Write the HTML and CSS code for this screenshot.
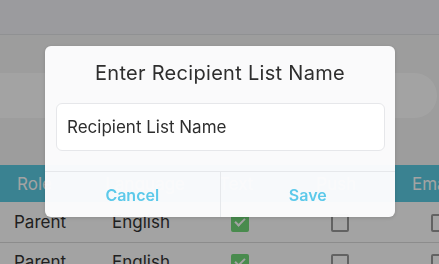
FILE: index.html
```html
<!DOCTYPE html>
<html lang="en">
<head>
  <meta charset="UTF-8">
  <meta name="viewport" content="width=device-width, initial-scale=1.0">
  <title>Recipient Lists</title>
  <link rel="stylesheet" href="styles.css">
</head>
<body>
  <div class="topbar"></div>

  <div class="search-row">
    <div class="search-pill"></div>
  </div>

  <table class="recipients">
    <thead>
      <tr>
        <th class="col-role">Role</th>
        <th class="col-lang">Language</th>
        <th class="col-check">Text</th>
        <th class="col-check">Push</th>
        <th class="col-email">Email</th>
      </tr>
    </thead>
    <tbody>
      <tr>
        <td class="col-role">Parent</td>
        <td class="col-lang">English</td>
        <td class="col-check"><span class="box checked"></span></td>
        <td class="col-check"><span class="box"></span></td>
        <td class="col-email"><span class="box"></span></td>
      </tr>
      <tr>
        <td class="col-role">Parent</td>
        <td class="col-lang">English</td>
        <td class="col-check"><span class="box checked"></span></td>
        <td class="col-check"><span class="box"></span></td>
        <td class="col-email"><span class="box"></span></td>
      </tr>
    </tbody>
  </table>

  <!-- Modal prompt -->
  <div class="backdrop"></div>
  <div class="dialog">
    <div class="dialog-title">Enter Recipient List Name</div>
    <div class="dialog-body">
      <input type="text" class="name-input" placeholder="Recipient List Name">
    </div>
    <div class="dialog-actions">
      <button class="action">Cancel</button>
      <button class="action">Save</button>
    </div>
  </div>
</body>
</html>
```

FILE: styles.css
```css
body {
  font-family: Inter, Lato, sans-serif;
  margin: 0;
  padding: 0;
  background-color: #f6f6f6;
  overflow: hidden;
  width: 439px;
  height: 264px;
}

.topbar {
  height: 34px;
  background-color: #f2f3f7;
  border-bottom: 1px solid #e2e3e6;
}

.search-row {
  padding: 38px 2px 47px 0;
}

.search-pill {
  height: 45px;
  margin-left: -30px;
  background-color: #ffffff;
  border-radius: 23px;
}

.recipients {
  width: 490px;
  border-collapse: collapse;
  table-layout: fixed;
}

.recipients th,
.recipients td {
  box-sizing: border-box;
  padding: 0;
  font-size: 17px;
  text-align: left;
  white-space: nowrap;
}

.recipients th {
  height: 37px;
  background-color: #5ccbe3;
  color: #ffffff;
  font-weight: normal;
}

.recipients td {
  height: 40px;
  color: #333;
  border-bottom: 1px solid #dcdcdc;
  background-color: #ffffff;
}

.recipients .col-role { width: 100px; padding-left: 14px; }
.recipients th.col-role { padding-left: 17px; }
.recipients .col-lang { width: 90px; padding-left: 12px; }
.recipients th.col-lang { text-align: center; padding-left: 0; }
.recipients .col-check { width: 100px; text-align: center; }
.recipients th.col-check { padding-right: 8px; }
.recipients .col-email { width: 200px; padding-left: 41px; }
.recipients th.col-email { padding-left: 22px; }

.box {
  display: inline-block;
  box-sizing: border-box;
  width: 18px;
  height: 18px;
  border: 2px solid #9a9a9a;
  border-radius: 2px;
  background-color: #ffffff;
  vertical-align: middle;
  position: relative;
}

.box.checked {
  background-color: #72d97a;
  border-color: #72d97a;
}

.box.checked::after {
  content: "";
  position: absolute;
  left: 4px;
  top: 0px;
  width: 4px;
  height: 8px;
  border: solid #ffffff;
  border-width: 0 2px 2px 0;
  transform: rotate(45deg);
}

/* Modal */
.backdrop {
  position: fixed;
  inset: 0;
  background-color: rgba(0, 0, 0, 0.36);
}

.dialog {
  position: fixed;
  top: 46px;
  left: 45px;
  width: 350px;
  background-color: rgba(253, 253, 254, 0.97);
  border-radius: 6px;
  box-shadow: 0 1px 4px rgba(0, 0, 0, 0.15);
  overflow: hidden;
}

.dialog-title {
  padding-top: 15px;
  height: 42px;
  text-align: center;
  font-size: 20px;
  letter-spacing: 0.3px;
  color: #2e2e2e;
}

.dialog-body {
  padding: 0 10px 20px 11px;
}

.name-input {
  display: block;
  box-sizing: border-box;
  width: 100%;
  height: 48px;
  padding: 0 10px;
  font-family: inherit;
  font-size: 17px;
  color: #333;
  background-color: #ffffff;
  border: 1px solid #e6e7ea;
  border-radius: 6px;
  outline: none;
}

.name-input::placeholder {
  color: #2e2e2e;
  opacity: 1;
}

.dialog-actions {
  display: flex;
  border-top: 1px solid #e6e8eb;
}

.action {
  flex: 1;
  height: 45px;
  padding: 0;
  border: none;
  background: transparent;
  font-family: inherit;
  font-size: 16px;
  font-weight: 600;
  color: #5cc9ea;
  cursor: pointer;
}

.action + .action {
  border-left: 1px solid #e6e8eb;
}
```
